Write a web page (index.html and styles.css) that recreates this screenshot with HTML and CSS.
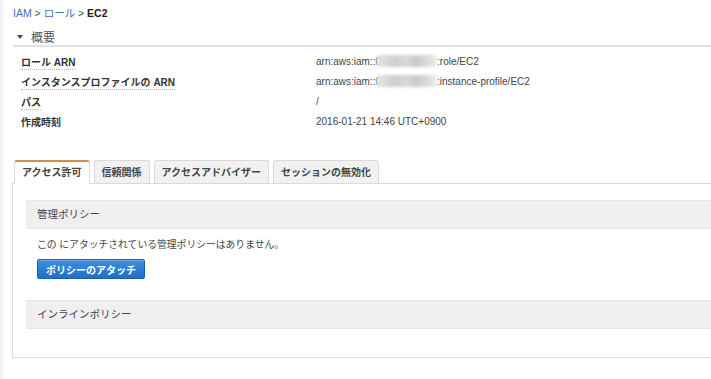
FILE: index.html
```html
<!doctype html>
<html lang="ja">
  <head>
    <meta charset="UTF-8" />
    <title>IAM ロール EC2</title>
    <link rel="stylesheet" href="styles.css">
  </head>
  <body>
    <div class="page">
      <div class="crumbs">
        <a href="#">IAM</a> &gt; <a href="#">ロール</a> &gt; <strong>EC2</strong>
      </div>

      <div class="summary">
        <div class="summary-head"><span class="caret"></span>概要</div>
        <div class="rows">
          <div class="label"><span class="dotted">ロール ARN</span></div>
          <div class="value">arn:aws:iam::0<span class="masked"></span>:role/EC2</div>

          <div class="label"><span class="dotted">インスタンスプロファイルの ARN</span></div>
          <div class="value">arn:aws:iam::0<span class="masked"></span>:instance-profile/EC2</div>

          <div class="label"><span class="dotted">パス</span></div>
          <div class="value">/</div>

          <div class="label"><span>作成時刻</span></div>
          <div class="value">2016-01-21 14:46 UTC+0900</div>
        </div>
      </div>

      <div class="tabs">
        <div class="tab active">アクセス許可</div>
        <div class="tab">信頼関係</div>
        <div class="tab">アクセスアドバイザー</div>
        <div class="tab">セッションの無効化</div>
      </div>
      <div class="panel">
        <div class="section-head">管理ポリシー</div>
        <div class="section-body">
          <p>この にアタッチされている管理ポリシーはありません。</p>
          <button class="btn">ポリシーのアタッチ</button>
        </div>
        <div class="section-head">インラインポリシー</div>
      </div>
    </div>
  </body>
</html>
```

FILE: styles.css
```css
body {
  margin: 0;
  font-family: "Liberation Sans", "Noto Sans CJK JP", sans-serif;
  font-size: 10px;
  color: #333;
  background-color: #ffffff;
}
.page {
  min-height: 379px;
  border-left: 3px solid #f1f1f1;
  padding: 5px 0 0 9px;
  box-sizing: border-box;
}
.crumbs {
  padding-left: 1px;
  height: 16px;
  line-height: 16px;
  font-size: 10.5px;
  color: #555;
}
.crumbs a {
  color: #3b73b9;
  text-decoration: none;
}
.crumbs strong {
  color: #222;
}
.summary-head {
  margin: 7px 0 0 1px;
  display: flex;
  align-items: center;
  height: 17px;
  font-size: 12px;
  color: #555;
  border-bottom: 2px solid #e2e2e2;
  padding-left: 4px;
}
.caret {
  width: 0;
  height: 0;
  border-left: 3px solid transparent;
  border-right: 3px solid transparent;
  border-top: 4px solid #444;
  margin-right: 8px;
}
.rows {
  display: grid;
  grid-template-columns: 295px 1fr;
  grid-auto-rows: 20px;
  align-items: center;
  padding: 4px 0 0 9px;
}
.label {
  font-weight: bold;
  color: #333;
}
.dotted {
  border-bottom: 1px dotted #bbb;
  padding-bottom: 1px;
}
.value {
  color: #444;
  white-space: nowrap;
}
.masked {
  display: inline-block;
  width: 60px;
  height: 12px;
  margin-left: -4px;
  vertical-align: -2px;
  background: linear-gradient(90deg, #e4e4e4, #cfcfcf 30%, #d8d8d8 50%, #c9c9c9 65%, #dcdcdc 85%, #ececec);
  filter: blur(1.5px);
}
.tabs {
  display: flex;
  gap: 4px;
  margin-top: 29px;
  padding-left: 2px;
  position: relative;
  z-index: 1;
}
.tab {
  height: 23px;
  line-height: 23px;
  padding: 0 7px;
  font-weight: bold;
  color: #444;
  background-color: #f1f1f1;
  border: 1px solid #dadada;
  border-bottom: none;
  border-radius: 3px 3px 0 0;
  box-sizing: border-box;
}
.tab.active {
  background-color: #ffffff;
  border-top: 2px solid #e08a3c;
  line-height: 22px;
  height: 24px;
  margin-bottom: -1px;
}
.panel {
  border: 1px solid #dadada;
  border-right: none;
  padding: 16px 0 28px 13px;
}
.section-head {
  background-color: #efefef;
  border-top: 1px solid #e6e6e6;
  border-bottom: 1px solid #e6e6e6;
  height: 27px;
  line-height: 27px;
  padding-left: 11px;
  font-size: 10.5px;
  color: #444;
}
.section-body {
  padding: 10px 11px 21px;
}
.section-body p {
  margin: 0 0 8px;
  line-height: 12px;
  font-size: 9.8px;
  color: #444;
}
.btn {
  display: block;
  font-family: inherit;
  font-size: 10px;
  font-weight: bold;
  color: #ffffff;
  height: 20px;
  padding: 0 8px;
  border: 1px solid #1f5fa8;
  border-radius: 2px;
  background: linear-gradient(#3d8fe0, #1f6fc6);
  box-shadow: inset 0 1px 0 rgba(255, 255, 255, 0.25);
}
```
